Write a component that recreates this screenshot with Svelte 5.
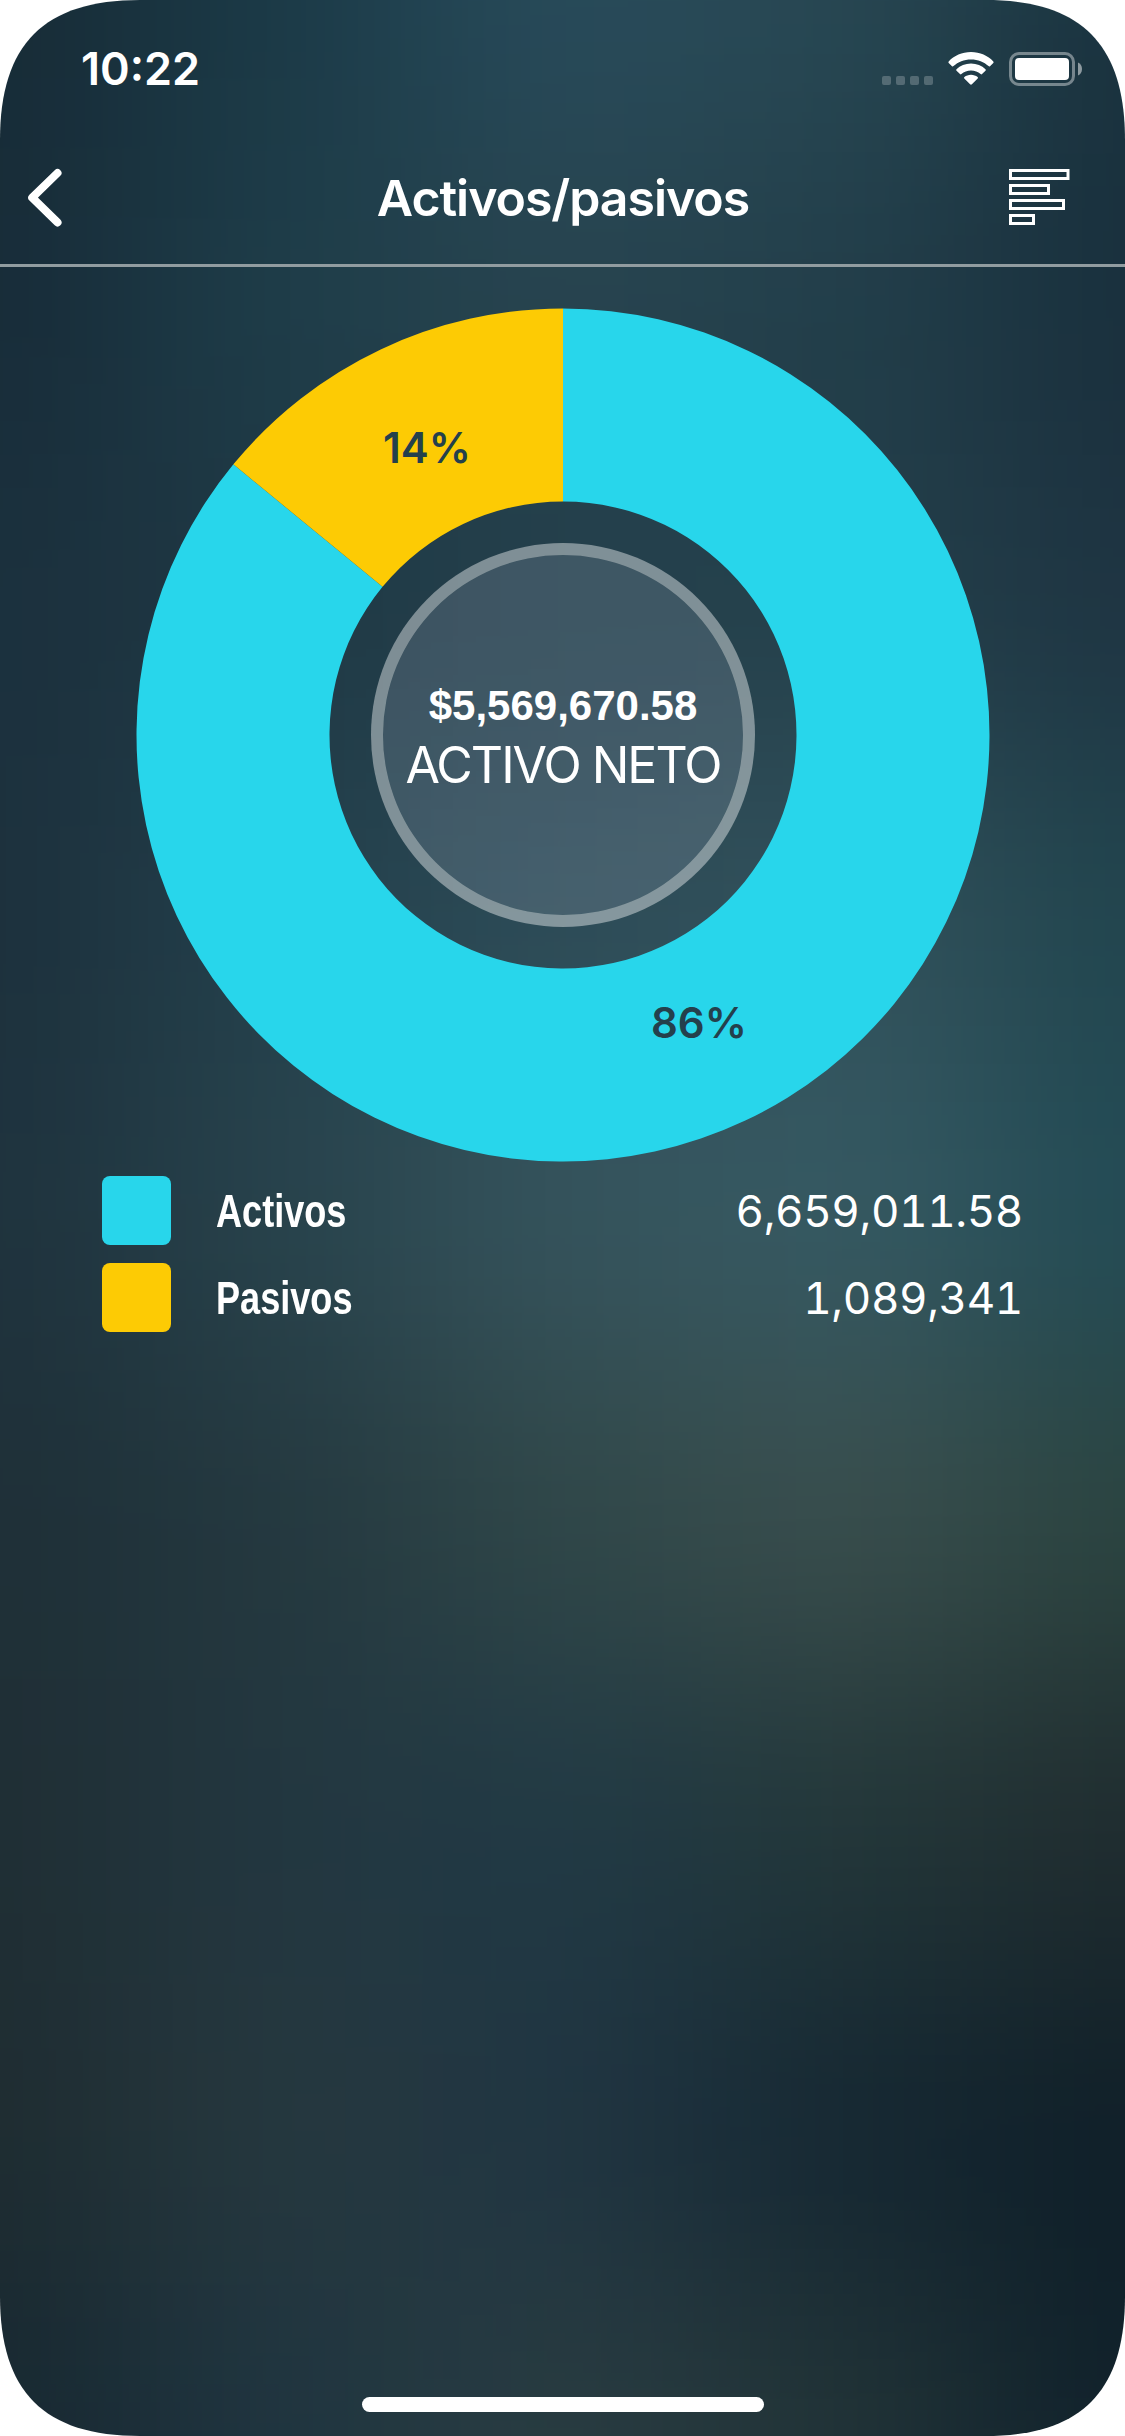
<script>
    let accounts = [
        { name: 'Activos', value: 6659011.58, color: '#28d6eb' },
        { name: 'Pasivos', value: 1089341, color: '#fdcb04' }
    ]

    let total = accounts.reduce((sum, a) => sum + a.value, 0);
    let net = accounts[0].value - accounts[1].value;

    // colour patches of the background, blurred into each other
    let mesh = [
        ['#172b36', '#1b3a47', '#284b5b', '#284853', '#19323e'],
        ['#172b38', '#1e3d49', '#28444f', '#223e4a', '#192f3c'],
        ['#1b303d', '#1f3844', '#233f4b', '#24404b', '#1e3442'],
        ['#1c303c', '#23404c', '#2d4c58', '#33525c', '#21454e'],
        ['#1e323d', '#28434c', '#36545d', '#365a63', '#234b55'],
        ['#1e2f37', '#24383f', '#304748', '#3a4e4d', '#2b4440'],
        ['#1f2e34', '#233740', '#203945', '#233739', '#202c2f'],
        ['#1e2c31', '#26383f', '#203542', '#152732', '#0f1f28'],
        ['#172831', '#1f3540', '#293c41', '#223437', '#10212b']
    ]

    const OUTER = 426.5;
    const INNER = 233.5;

    function point(radius, turn) {
        const angle = turn * 2 * Math.PI;
        return `${radius * Math.sin(angle)} ${-radius * Math.cos(angle)}`;
    }

    function slicePath(from, to) {
        const large = to - from > 0.5 ? 1 : 0;
        return `M${point(OUTER, from)} A${OUTER} ${OUTER} 0 ${large} 1 ${point(OUTER, to)} L${point(INNER, to)} A${INNER} ${INNER} 0 ${large} 0 ${point(INNER, from)}Z`;
    }

    let start = 0;
    let slices = accounts.map((account) => {
        const share = account.value / total;
        const middle = (start + share / 2) * 2 * Math.PI;
        const slice = {
            color: account.color,
            d: slicePath(start, start + share),
            label: Math.round(share * 100) + '%',
            x: 318 * Math.sin(middle),
            y: -318 * Math.cos(middle)
        };
        start += share;
        return slice;
    });

    function format(n, digits = 0) {
        return n.toLocaleString('en-US', { minimumFractionDigits: digits, maximumFractionDigits: 2 });
    }
</script>

<main class="screen">
    <svg class="backdrop" viewBox="0 0 1125 2436" aria-hidden="true">
        <defs>
            <filter id="soften" filterUnits="userSpaceOnUse" x="-500" y="-500" width="2125" height="3436" color-interpolation-filters="sRGB">
                <feGaussianBlur stdDeviation="105" />
            </filter>
        </defs>
        <g filter="url(#soften)">
            {#each mesh as row, r}
                {#each row as color, c}
                    <rect
                        x={c == 0 ? -500 : c * 281 - 141}
                        y={r == 0 ? -500 : r * 304.5 - 153}
                        width={c == 0 || c == 4 ? 642 : 283}
                        height={r == 0 || r == 8 ? 655 : 307}
                        fill={color}
                    />
                {/each}
            {/each}
        </g>
    </svg>

    <div class="status">
        <span class="clock">10:22</span>
        <div class="indicators">
            <div class="signal"><i></i><i></i><i></i><i></i></div>
            <svg class="wifi" width="46" height="34" viewBox="0 0 46 34">
                <path d="M23 0C32 0 40 3.6 45.3 9.4Q46 10.2 45.3 11L42 14.2Q41.3 14.8 40.5 14.1C36 9.8 30 7.4 23 7.4C16 7.4 10 9.8 5.5 14.1Q4.7 14.8 4 14.2L.7 11Q0 10.2 .7 9.4C6 3.6 14 0 23 0Z" />
                <path d="M23 11.5C28.7 11.5 33.8 13.7 37.5 17.3Q38.2 18 37.5 18.7L34 22.1Q33.4 22.7 32.6 22.1C30 19.8 26.7 18.5 23 18.5C19.3 18.5 16 19.8 13.4 22.1Q12.6 22.7 12 22.1L8.5 18.7Q7.8 18 8.5 17.3C12.2 13.7 17.3 11.5 23 11.5Z" />
                <path d="M23 22.8C25.6 22.8 27.9 23.7 29.6 25.1Q30.4 25.8 29.7 26.5L23.9 32.3Q23 33.2 22.1 32.3L16.3 26.5Q15.6 25.8 16.4 25.1C18.1 23.7 20.4 22.8 23 22.8Z" />
            </svg>
            <svg class="battery" width="74" height="34" viewBox="0 0 74 34">
                <rect x="1.5" y="1.5" width="63" height="31" rx="8.5" fill="none" stroke="#fff" stroke-width="3" opacity="0.4" />
                <rect x="6" y="6" width="54" height="22" rx="4" />
                <path d="M69 10.5C71.5 11.5 73 14 73 17C73 20 71.5 22.5 69 23.5Z" opacity="0.5" />
            </svg>
        </div>
    </div>

    <header>
        <button class="back" aria-label="Atrás">
            <svg width="40" height="60" viewBox="0 0 40 60">
                <path d="M31.5 5L6.2 29.7L31.5 54.4" fill="none" stroke="#fff" stroke-width="8" stroke-linecap="round" stroke-linejoin="round" />
            </svg>
        </button>
        <h1>Activos/pasivos</h1>
        <button aria-label="Detalle">
            <svg width="61" height="57" viewBox="0 0 61 57" fill="none" stroke="#fff" stroke-width="3">
                <rect x="1.5" y="1.5" width="57.5" height="8" />
                <rect x="1.5" y="16.5" width="38" height="8" />
                <rect x="1.5" y="31.5" width="53" height="8" />
                <rect x="1.5" y="46.5" width="23" height="8" />
            </svg>
        </button>
    </header>

    <section class="chart">
        <svg class="donut" width="854" height="854" viewBox="-427 -427 854 854">
            {#each slices as slice}
                <path d={slice.d} fill={slice.color} />
                <text x={slice.x} y={slice.y}>{slice.label}</text>
            {/each}
        </svg>
        <div class="center">
            <strong>${format(net, 2)}</strong>
            <span>ACTIVO NETO</span>
        </div>
    </section>

    <ul>
        {#each accounts as account}
            <li>
                <svg class="swatch" width="69" height="69"><rect width="69" height="69" rx="8" fill={account.color} /></svg>
                <span class="name">{account.name}</span>
                <span class="value">{format(account.value)}</span>
            </li>
        {/each}
    </ul>

    <div class="home"></div>
</main>

<style>
    :global(body) {
        margin: 0;
        background: #fff;
    }

    .screen {
        position: relative;
        display: flex;
        flex-direction: column;
        width: 1125px;
        height: 2436px;
        overflow: hidden;
        color: #fff;
        font-family: Inter, "Liberation Sans", sans-serif;
        clip-path: path("M0 140C0 44 44 0 140 0H985C1081 0 1125 44 1125 140V2296C1125 2392 1081 2436 985 2436H140C44 2436 0 2392 0 2296Z");
    }

    .backdrop {
        position: absolute;
        inset: 0;
        z-index: -1;
    }

    .status {
        display: flex;
        justify-content: space-between;
        box-sizing: border-box;
        height: 132px;
        padding: 42px 42px 0 81px;
    }

    .clock {
        font-size: 45px;
        font-weight: 600;
        line-height: 54px;
    }

    .indicators {
        display: flex;
        align-items: flex-start;
        padding-top: 10px;
        fill: #fff;
    }

    .signal {
        display: flex;
        gap: 5px;
        margin: 24px 15px 0 0;
    }

    .signal i {
        width: 9px;
        height: 9px;
        border-radius: 2px;
        background: rgba(255, 255, 255, 0.22);
    }

    .wifi {
        margin-right: 15px;
    }

    header {
        display: flex;
        align-items: center;
        justify-content: space-between;
        box-sizing: border-box;
        height: 135px;
        padding: 0 55px 1px 26px;
        border-bottom: 3px solid #919ca0;
    }

    button {
        display: flex;
        padding: 0;
        border: 0;
        background: none;
    }

    .back {
        width: 91px;
    }

    h1 {
        margin: 0;
        font-size: 50px;
        font-weight: 600;
        letter-spacing: -1.05px;
    }

    .chart {
        display: grid;
        place-items: center;
        margin-top: 41px;
        padding-left: 1px;
    }

    .donut, .center {
        grid-area: 1 / 1;
    }

    .donut text {
        fill: #24404c;
        font-size: 42px;
        font-weight: 600;
        text-anchor: middle;
        dominant-baseline: central;
    }

    .center {
        display: flex;
        flex-direction: column;
        align-items: center;
        justify-content: center;
        box-sizing: border-box;
        width: 384px;
        height: 384px;
        padding-top: 11px;
        border: 12px solid rgba(255, 255, 255, 0.42);
        border-radius: 50%;
        background: rgba(170, 180, 200, 0.2);
        background-clip: padding-box;
        white-space: nowrap;
    }

    .center strong {
        font-family: "Liberation Sans", sans-serif;
        font-size: 42px;
        line-height: 50px;
    }

    .center span {
        font-size: 50px;
        font-weight: 400;
        line-height: 69px;
        letter-spacing: -2px;
    }

    ul {
        display: flex;
        flex-direction: column;
        gap: 18px;
        margin: 14px 102px 0;
        padding: 0;
        list-style: none;
    }

    li {
        display: flex;
        align-items: center;
        height: 69px;
    }

    .name {
        flex: 1;
        margin-left: 45px;
        font-family: "Liberation Sans", sans-serif;
        font-size: 46px;
        font-weight: bold;
        transform: scaleX(0.785);
        transform-origin: left;
    }

    .value {
        font-size: 44px;
        font-weight: 400;
        font-feature-settings: "tnum";
        letter-spacing: -0.4px;
    }

    .home {
        width: 402px;
        height: 15px;
        margin: auto auto 24px;
        border-radius: 8px;
        background: #fff;
    }
</style>
